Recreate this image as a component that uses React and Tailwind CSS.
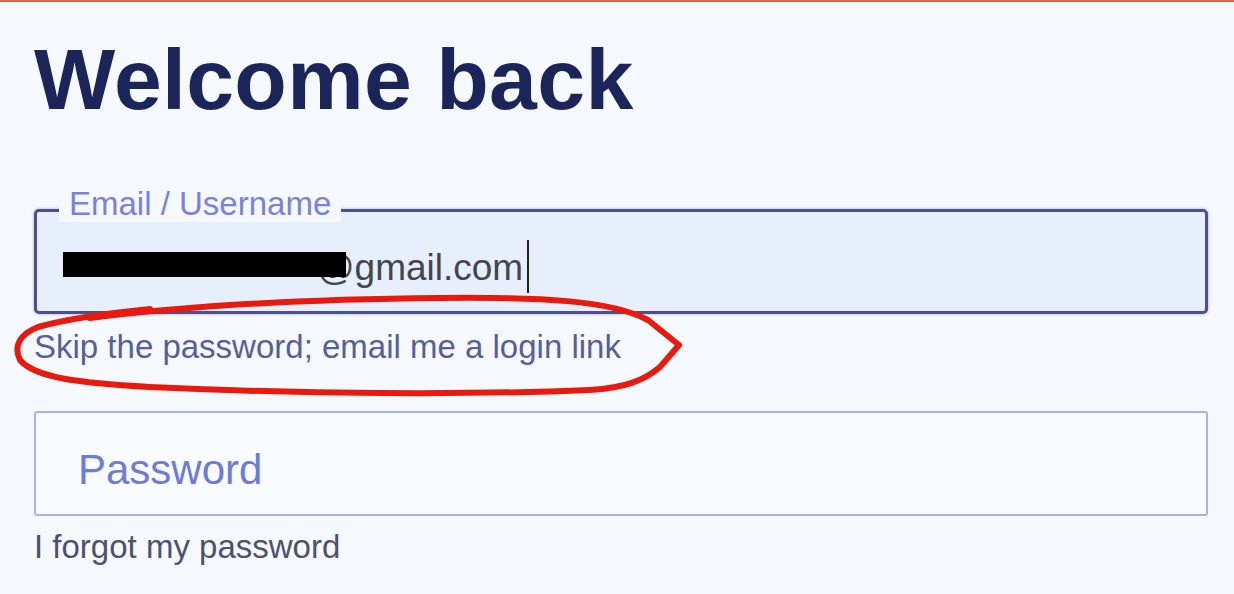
export default function App() {
  const font = { fontFamily: '"Liberation Sans", Arial, sans-serif' };
  return (
    <div className="relative w-[1234px] h-[594px] overflow-hidden bg-[#f5f9fd] flex flex-col" style={font}>
      <div className="h-[2px] bg-[#d6694f]" />
      <main className="flex flex-col pl-[34px] pr-[26px] pt-[34px]">
        <h1 className="text-[86px] leading-[86px] font-bold text-[#1c2559] tracking-[0.3px]">
          Welcome back
        </h1>

        <div className="relative mt-[87px] h-[105px] rounded-[5px] border-[3px] border-[#4f5089] bg-[#e7effc] shadow-[0_0_3px_rgba(60,60,130,0.45)] flex items-start pl-[26px] pt-[36px]">
          <span className="absolute left-[22px] top-[-27px] px-[10px] bg-[#f5f9fd] text-[33px] leading-[37px] text-[#7b82d8]">
            Email / Username
          </span>
          <div className="flex items-baseline text-[37px] leading-[40px] text-[#45454b] whitespace-nowrap">
            <span className="w-[254px]" />
            <span>@gmail.com</span>
          </div>
          <div className="absolute left-[26px] top-[40px] w-[283px] h-[25px] bg-black" />
          <div className="absolute left-[490px] top-[28px] w-[2px] h-[53px] bg-[#222]" />
        </div>

        <div className="mt-[13px] text-[33px] leading-[40px] text-[#5a5e98]">
          Skip the password; email me a login link
        </div>

        <div className="mt-[44px] h-[105px] rounded-[3px] border-2 border-[#aab1ee] bg-[#f8fbff] flex items-start pl-[42px] pt-[33px]">
          <span className="text-[42px] leading-[48px] text-[#6f7bd8]">Password</span>
        </div>

        <div className="mt-[11px] text-[33px] leading-[40px] text-[#4f5070]">
          I forgot my password
        </div>
      </main>

      <svg
        className="absolute left-0 top-0 pointer-events-none"
        width="1234"
        height="594"
        viewBox="0 0 1234 594"
        fill="none"
      >
        <path
          d="M 90 318 C 200 304, 330 299, 440 298 C 540 297, 610 300, 648 320 L 679 345 L 660 367 C 645 380, 625 388, 590 390 C 470 395, 300 394, 150 387 C 80 383, 35 378, 20 360 C 13 346, 20 334, 38 327 C 70 318, 110 313, 150 309"
          stroke="#e8190f"
          strokeWidth="6"
          strokeLinecap="round"
          strokeLinejoin="round"
        />
      </svg>
    </div>
  );
}
